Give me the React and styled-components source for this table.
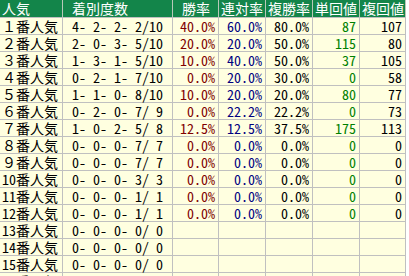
import styled, {createGlobalStyle} from 'styled-components'

const GlobalStyle = createGlobalStyle`
  body {
    margin: 0;
    background: #fff;
  }
`

const COLS = [
  {key: 'rank', title: '人気', width: 63, align: 'left'},
  {key: 'record', title: ' 着別度数', width: 110, align: 'left'},
  {key: 'win', title: ' 勝率', width: 46, align: 'right', color: '#800000'},
  {key: 'top2', title: '連対率', width: 47, align: 'right', color: '#000080'},
  {key: 'top3', title: '複勝率', width: 47, align: 'right', color: '#000'},
  {key: 'winRet', title: '単回値', width: 47, align: 'right', color: '#008000'},
  {key: 'placeRet', title: '複回値', width: 46, align: 'right', color: '#000'},
]

const FULL = ['０', '１', '２', '３', '４', '５', '６', '７', '８', '９']

const rows = [
  ['4- 2- 2- 2/10', '40.0%', '60.0%', '80.0%', '87', '107'],
  ['2- 0- 3- 5/10', '20.0%', '20.0%', '50.0%', '115', '80'],
  ['1- 3- 1- 5/10', '10.0%', '40.0%', '50.0%', '37', '105'],
  ['0- 2- 1- 7/10', '0.0%', '20.0%', '30.0%', '0', '58'],
  ['1- 1- 0- 8/10', '10.0%', '20.0%', '20.0%', '80', '77'],
  ['0- 2- 0- 7/ 9', '0.0%', '22.2%', '22.2%', '0', '73'],
  ['1- 0- 2- 5/ 8', '12.5%', '12.5%', '37.5%', '175', '113'],
  ['0- 0- 0- 7/ 7', '0.0%', '0.0%', '0.0%', '0', '0'],
  ['0- 0- 0- 7/ 7', '0.0%', '0.0%', '0.0%', '0', '0'],
  ['0- 0- 0- 3/ 3', '0.0%', '0.0%', '0.0%', '0', '0'],
  ['0- 0- 0- 1/ 1', '0.0%', '0.0%', '0.0%', '0', '0'],
  ['0- 0- 0- 1/ 1', '0.0%', '0.0%', '0.0%', '0', '0'],
  ['0- 0- 0- 0/ 0', '', '', '', '', ''],
  ['0- 0- 0- 0/ 0', '', '', '', '', ''],
  ['0- 0- 0- 0/ 0', '', '', '', '', ''],
  ['0- 0- 0- 0/ 0', '', '', '', '', ''],
]

const rankLabel = n => (n < 10 ? FULL[n] : String(n)) + '番人気'

const Table = styled.table`
  border-collapse: separate;
  border-spacing: 0;
  table-layout: fixed;
  width: 406px;
  font-family: "Noto Sans Mono CJK JP", "Noto Sans CJK JP", "Liberation Mono", monospace;
  font-size: 14px;
`

const HeadCell = styled.th`
  box-sizing: border-box;
  width: ${p => p.$width}px;
  height: 18px;
  padding: 0 0 0 2px;
  background: #13854a;
  color: #fff;
  font-weight: normal;
  text-align: left;
  white-space: pre;
  line-height: 17px;
  border-right: 1px solid #b8c8b8;
  border-bottom: 1px solid #c0c0c0;
`

const Cell = styled.td`
  box-sizing: border-box;
  height: 17px;
  padding: ${p => (p.$align === 'right' ? '0 3px 0 0' : '0 0 0 2px')};
  background: #ffffe0;
  color: ${p => p.$color || '#000'};
  text-align: ${p => p.$align};
  white-space: pre;
  line-height: 16px;
  border-right: 1px solid #c0c0c0;
  border-bottom: 1px solid #c0c0c0;
`

export default function App() {
  return <>
    <GlobalStyle/>
    <Table>
      <thead>
        <tr>
          {COLS.map(c => <HeadCell key={c.key} $width={c.width}>{c.title}</HeadCell>)}
        </tr>
      </thead>
      <tbody>
        {rows.map((r, i) => <tr key={i}>
          <Cell $align="left">{rankLabel(i + 1)}</Cell>
          <Cell $align="left">{' ' + r[0]}</Cell>
          {r.slice(1).map((v, j) => <Cell key={j} $align="right" $color={COLS[j + 2].color}>{v}</Cell>)}
        </tr>)}
      </tbody>
    </Table>
  </>
}
